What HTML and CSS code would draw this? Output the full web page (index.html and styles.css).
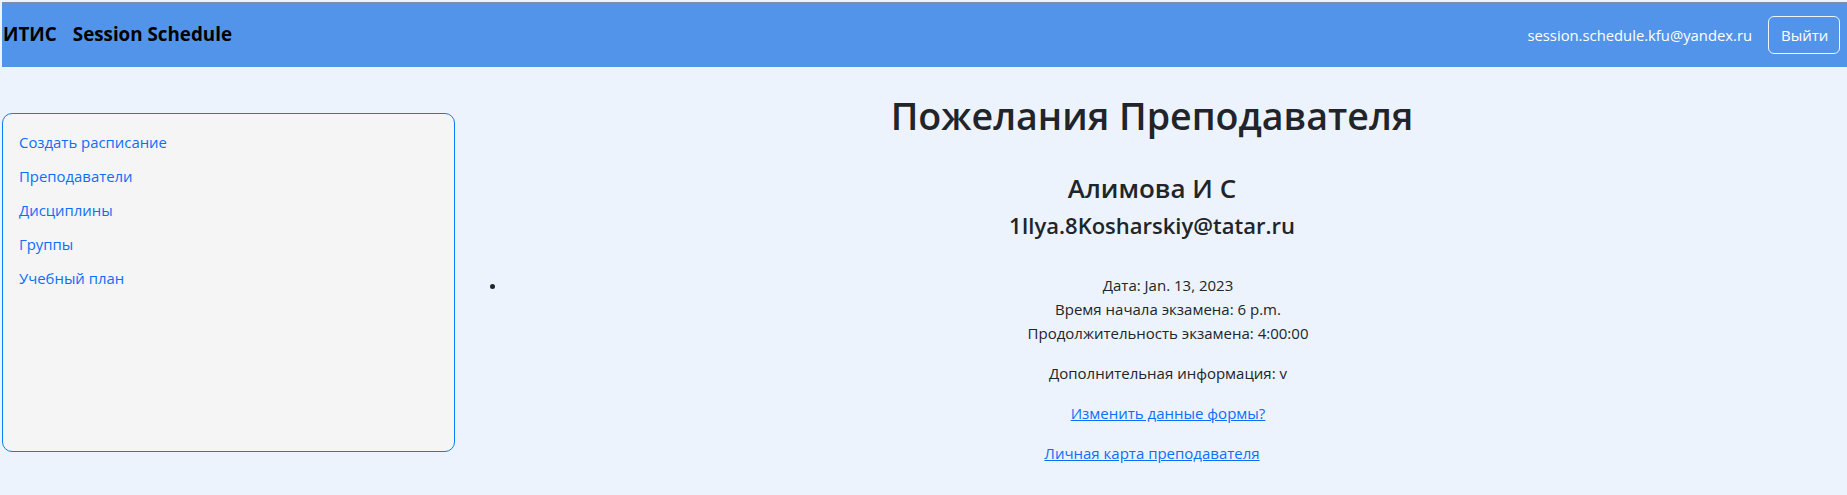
FILE: index.html
```html
<!DOCTYPE html>
<html lang="ru">
<head>
<meta charset="utf-8">
<title>Session Schedule</title>
<link rel="stylesheet" href="styles.css">
</head>
<body>
<header class="navbar">
  <div class="brand-group">
    <a class="brand" href="#">ИТИС</a>
    <a class="brand" href="#">Session Schedule</a>
  </div>
  <div class="user">
    <span class="user-email">session.schedule.kfu@yandex.ru</span>
    <button class="btn-logout" type="button">Выйти</button>
  </div>
</header>
<div class="layout">
  <aside class="sidebar">
    <ul class="side-nav">
      <li><a href="#">Создать расписание</a></li>
      <li><a href="#">Преподаватели</a></li>
      <li><a href="#">Дисциплины</a></li>
      <li><a href="#">Группы</a></li>
      <li><a href="#">Учебный план</a></li>
    </ul>
  </aside>
  <main class="content">
    <h1 class="title">Пожелания Преподавателя</h1>
    <h3 class="teacher-name">Алимова И С</h3>
    <h4 class="teacher-email">1Ilya.8Kosharskiy@tatar.ru</h4>
    <ul class="wishes">
      <li>
        <p>Дата: Jan. 13, 2023<br>Время начала экзамена: 6 p.m.<br>Продолжительность экзамена: 4:00:00</p>
        <p>Дополнительная информация: v</p>
        <p><a href="#">Изменить данные формы?</a></p>
      </li>
    </ul>
    <p class="card-link"><a href="#">Личная карта преподавателя</a></p>
  </main>
</div>
</body>
</html>
```

FILE: styles.css
```css
* { box-sizing: border-box; }
html, body { margin: 0; padding: 0; }
body {
  background: #ecf3fd;
  color: #212529;
  font-family: "Open Sans", "Noto Sans", sans-serif;
  font-size: 15px;
  line-height: 24px;
  padding-top: 2px;
}
a { color: #0d6efd; }

.navbar {
  margin-left: 2px;
  height: 65px;
  background: #5294ea;
  border-top: 1px solid #7d8fa8;
  display: flex;
  align-items: center;
  justify-content: space-between;
  padding: 0 7px 0 1px;
}
.brand-group { display: flex; align-items: center; margin-top: -2px; }
.brand {
  color: #000;
  font-weight: 700;
  font-size: 18.8px;
  text-decoration: none;
  margin-right: 16px;
  line-height: 30px;
}
.user { display: flex; align-items: center; gap: 16px; }
.user-email { color: #fff; font-size: 14.8px; }
.btn-logout {
  font-family: inherit;
  font-size: 15px;
  line-height: 24px;
  color: #fff;
  background: transparent;
  border: 1px solid #f1f4f8;
  border-radius: 6px;
  padding: 6px 12px;
  height: 38px;
  width: 72px;
}

.layout { display: flex; align-items: flex-start; }
.sidebar {
  margin: 46px 0 0 2px;
  width: 453px;
  height: 339px;
  background: #f5f5f5;
  border: 1px solid #0d7bff;
  border-radius: 10px;
  flex: none;
}
.side-nav { list-style: none; margin: 0; padding: 11px 16px; }
.side-nav a {
  display: block;
  padding: 5px 0;
  text-decoration: none;
  font-size: 14.9px;
}

.content {
  flex: 1;
  margin: 0 18px 0 20px;
  padding-top: 25px;
  text-align: center;
}
.title {
  margin: 0;
  font-size: 37.6px;
  font-weight: 600;
  line-height: 48px;
}
.teacher-name {
  margin: 31px 0 0;
  font-size: 26px;
  font-weight: 600;
  line-height: 34px;
}
.teacher-email {
  margin: 6px 0 0;
  font-size: 22px;
  font-weight: 600;
  line-height: 29px;
}
.wishes { margin: 33px 0 16px; padding-left: 32px; }
.wishes p { margin: 0 0 16px; }
.card-link { margin: 0 0 16px; }
```
